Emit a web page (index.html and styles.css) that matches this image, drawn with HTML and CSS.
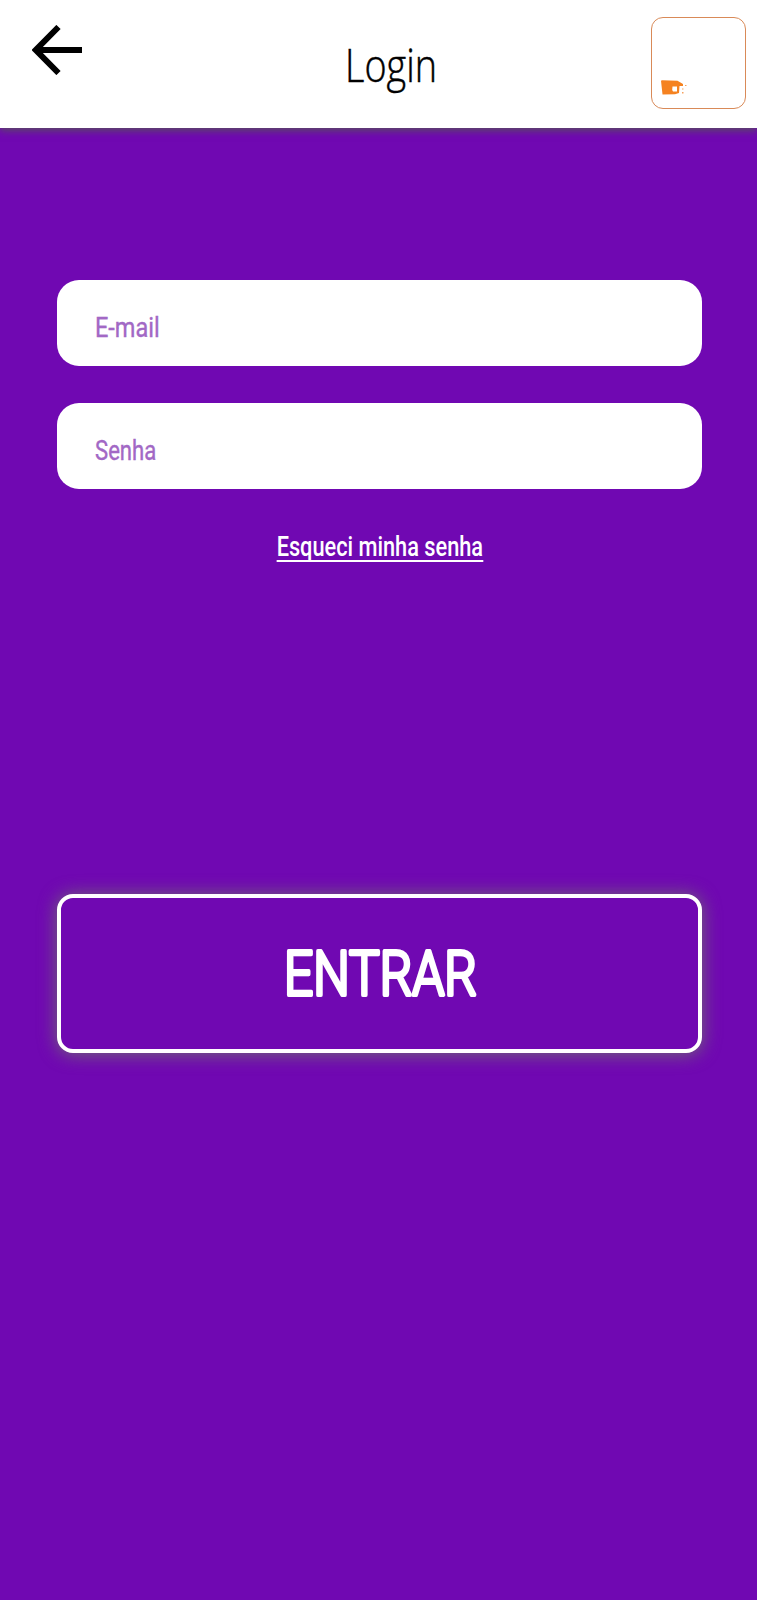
FILE: index.html
```
<!DOCTYPE html>
<html lang="pt-BR">
<head>
    <meta charset="UTF-8">
    <title>Login</title>
    <link rel="stylesheet" href="styles.css">
</head>
<body>
    <header class="topbar">
        <a class="back" href="#" aria-label="Voltar">
            <svg width="50" height="50" viewBox="0 0 50 50">
                <path d="M26.500 2 3.800 25l22.700 23M3.800 25H50" fill="none" stroke="#000" stroke-width="6"/>
            </svg>
        </a>
        <h1><span>Login</span></h1>
        <div class="logo">
            <svg width="28" height="16" viewBox="0 0 28 16">
                <path d="M0 .8 1 .3 16.500.8 22 4v2h-3.500l-.5 7-4 1.200-12.500.3Z" fill="#f58220"/>
                <path d="M11.500 6.500h4.500v5h-4l-.8-1.500Z" fill="#fff"/>
                <path d="M21 8.500h1.500v1H21Zm0 3.500h1.500v1.500H21Zm3-7h1.500v1H24Z" fill="#f7a25f"/>
            </svg>
        </div>
    </header>

    <main>
        <form>
            <div class="field"><span class="email">E-mail</span></div>
            <div class="field"><span class="senha">Senha</span></div>
            <a class="forgot" href="#"><span>Esqueci minha senha</span></a>
            <button class="enter" type="button">
                <svg width="220" height="100" viewBox="0 0 220 100">
                    <text x="14" y="71" textLength="193" lengthAdjust="spacingAndGlyphs">ENTRAR</text>
                </svg>
            </button>
        </form>
    </main>
</body>
</html>
```

FILE: styles.css
```
* {
    box-sizing: border-box;
}
body {
    margin: 0;
    min-height: 1600px;
    background-color: #7008b2;
    font-family: Roboto, sans-serif;
}
.topbar {
    display: flex;
    justify-content: space-between;
    height: 128px;
    padding: 17px 11px 0 32px;
    background-color: #fff;
    box-shadow: 0 2px 8px #555;
}
.back {
    width: 100px;
    height: 50px;
    margin-top: 8px;
}
.topbar h1 {
    margin: 17px 0 0;
    font: 300 46px/60px "Open Sans", sans-serif;
}
h1 span,
.field span,
.forgot span {
    display: inline-block;
    white-space: nowrap;
}
h1 span {
    transform: scaleX(.82);
    -webkit-text-stroke: .5px #000;
}
.logo {
    width: 95px;
    height: 92px;
    padding: 62px 0 0 9px;
    border: 1px solid #d98a58;
    border-radius: 12px;
}
.logo svg {
    display: block;
}
form {
    display: flex;
    flex-direction: column;
    margin: 152px 55px 0 57px;
}
.field {
    height: 86px;
    margin-bottom: 37px;
    padding: 31px 38px 0;
    border-radius: 22px;
    background-color: #fff;
    color: #a268c5;
    font-size: 28px;
    line-height: 34px;
}
.field span {
    transform: scaleX(.84);
    transform-origin: left;
    -webkit-text-stroke: .4px #a268c5;
}
.field .senha {
    transform: scaleX(.79);
}
.forgot {
    align-self: center;
    margin-top: 3px;
    color: #fff;
    font-size: 28px;
    font-weight: 500;
    line-height: 36px;
    text-decoration: none;
}
.forgot span {
    transform: scaleX(.777);
    border-bottom: 2px solid #fff;
    line-height: 26px;
}
.enter {
    height: 159px;
    margin-top: 329px;
    padding: 0;
    border: 4px solid #fff;
    border-radius: 16px;
    background-color: #7008b2;
    box-shadow: 0 1px 18px #6f6f6f;
}
.enter svg {
    display: block;
    margin: 0 auto;
}
.enter text {
    fill: #fff;
    stroke: #fff;
    stroke-width: 4px;
    stroke-linejoin: round;
    font: 300 61px Roboto, sans-serif;
}
```
